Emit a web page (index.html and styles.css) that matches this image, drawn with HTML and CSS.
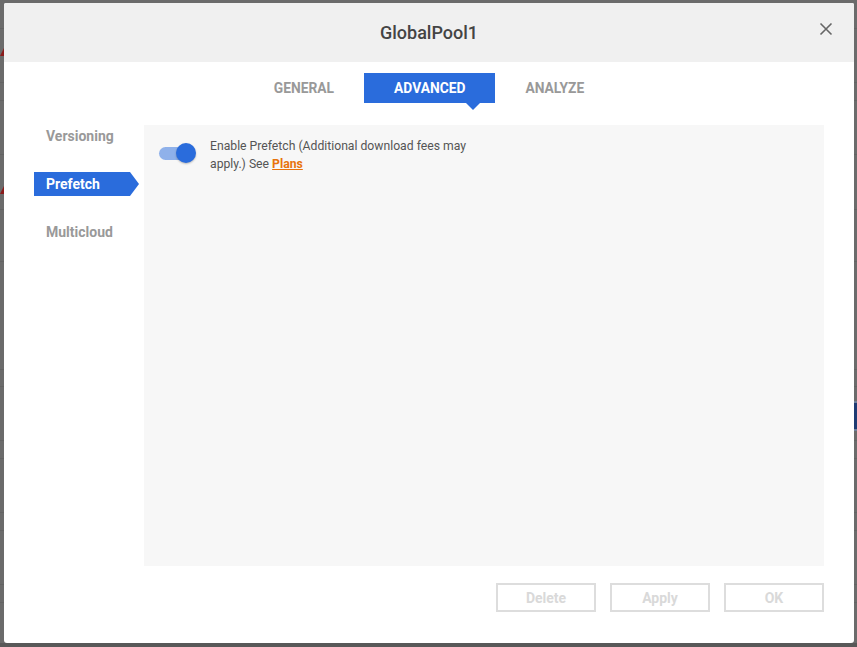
FILE: index.html
```html
<!DOCTYPE html>
<html>
<head>
<meta charset="utf-8">
<link rel="stylesheet" href="styles.css">
</head>
<body>
<div class="backdrop">
  <div class="bd-line" style="top:28px"></div>
  <div class="bd-line" style="top:82px"></div>
  <div class="bd-line" style="top:100px"></div>
  <div class="bd-line" style="top:154px"></div>
  <div class="bd-line" style="top:209px"></div>
  <div class="bd-line" style="top:261px"></div>
  <div class="bd-line" style="top:369px"></div>
  <div class="bd-line" style="top:386px"></div>
  <div class="bd-line" style="top:440px"></div>
  <div class="bd-line" style="top:458px"></div>
  <div class="bd-line" style="top:512px"></div>
  <div class="bd-line" style="top:530px"></div>
  <div class="bd-line" style="top:584px"></div>
  <div class="bd-line" style="top:602px"></div>
  <div class="bd-tri" style="top:48px"></div>
  <div class="bd-tri" style="top:186px"></div>
  <div class="bd-blue"></div>
  <div class="bd-bottom"></div>
</div>

<div class="dialog">
  <div class="header">
    <div class="title">GlobalPool1</div>
    <button class="close" aria-label="Close">
      <svg width="14" height="14" viewBox="0 0 14 14"><path d="M1.5 1.5 L12.5 12.5 M12.5 1.5 L1.5 12.5" stroke="#666" stroke-width="1.6" fill="none"/></svg>
    </button>
  </div>

  <div class="tabs">
    <div class="tab">GENERAL</div>
    <div class="tab active">ADVANCED</div>
    <div class="tab">ANALYZE</div>
  </div>

  <div class="body">
    <div class="sidebar">
      <div class="side-item">Versioning</div>
      <div class="side-item active">Prefetch</div>
      <div class="side-item">Multicloud</div>
    </div>
    <div class="panel">
      <div class="option">
        <div class="toggle"><div class="track"></div><div class="knob"></div></div>
        <div class="option-text">
          <span class="line">Enable Prefetch (Additional download fees may</span>
          <span class="line"><span>apply.) See</span> <a class="link" href="#">Plans</a></span>
        </div>
      </div>
    </div>
  </div>

  <div class="footer">
    <button class="btn">Delete</button>
    <button class="btn">Apply</button>
    <button class="btn">OK</button>
  </div>
</div>
</body>
</html>
```

FILE: styles.css
```css
html, body {
  margin: 0;
  padding: 0;
}
body {
  width: 857px;
  height: 647px;
  background: #6b6b6b;
  font-family: Roboto, "Liberation Sans", Arial, sans-serif;
  overflow: hidden;
  position: relative;
}
.backdrop {
  position: absolute;
  inset: 0;
}
.bd-line {
  position: absolute;
  left: 0;
  right: 0;
  height: 1px;
  background: #636363;
}
.bd-tri {
  position: absolute;
  left: 0;
  width: 0;
  height: 0;
  border-left: 4px solid transparent;
  border-bottom: 8px solid #8a1b1b;
}
.bd-blue {
  position: absolute;
  right: 0;
  top: 401px;
  width: 4px;
  height: 30px;
  background: #1e3b73;
  border-top: 2px solid #6f7f99;
  border-bottom: 2px solid #6f7f99;
  box-sizing: border-box;
}
.bd-bottom {
  position: absolute;
  left: 0;
  right: 0;
  bottom: 0;
  height: 4px;
  background: #585858;
}

.dialog {
  position: absolute;
  left: 4px;
  top: 3px;
  width: 850px;
  height: 640px;
  background: #fff;
  border-radius: 2px 2px 3px 3px;
  display: flex;
  flex-direction: column;
  overflow: hidden;
}
.header {
  height: 59px;
  background: #f0f0f0;
  display: flex;
  align-items: center;
  justify-content: center;
  position: relative;
  flex: none;
}
.title {
  font-size: 18px;
  font-weight: 500;
  color: #444;
  margin-top: -1px;
}
.close {
  position: absolute;
  right: 21px;
  top: 19px;
  width: 14px;
  height: 14px;
  padding: 0;
  border: 0;
  background: none;
  display: block;
}
.close svg { display: block; }

.tabs {
  display: flex;
  justify-content: center;
  margin-top: 11px;
  height: 30px;
  flex: none;
}
.tab {
  padding: 0 30px;
  height: 30px;
  line-height: 30px;
  font-size: 13.8px;
  font-weight: 700;
  color: #999;
  position: relative;
}
.tab.active {
  background: #2a6cdc;
  color: #fff;
}
.tab.active::after {
  content: "";
  position: absolute;
  right: 14px;
  top: 29px;
  width: 0;
  height: 0;
  border-left: 8px solid transparent;
  border-right: 8px solid transparent;
  border-top: 8px solid #2a6cdc;
}

.body {
  display: flex;
  padding: 0 30px;
  margin-top: 22px;
  flex: none;
}
.sidebar {
  width: 110px;
  flex: none;
  display: flex;
  flex-direction: column;
  gap: 24px;
  margin-top: -1px;
}
.side-item {
  width: 96px;
  height: 24px;
  line-height: 24px;
  padding-left: 12px;
  box-sizing: border-box;
  font-size: 14px;
  font-weight: 700;
  color: #999;
  position: relative;
}
.side-item.active {
  background: #2a6cdc;
  color: #fff;
}
.side-item.active::after {
  content: "";
  position: absolute;
  left: 96px;
  top: 0;
  width: 0;
  height: 0;
  border-top: 12px solid transparent;
  border-bottom: 12px solid transparent;
  border-left: 9px solid #2a6cdc;
}
.panel {
  width: 680px;
  height: 441px;
  background: #f7f7f7;
  box-sizing: border-box;
  padding: 12px 0 0 15px;
}
.option {
  display: flex;
  align-items: flex-start;
}
.toggle {
  position: relative;
  width: 37px;
  height: 20px;
  margin-top: 6px;
  flex: none;
}
.track {
  position: absolute;
  left: 0;
  top: 4px;
  width: 32px;
  height: 13px;
  border-radius: 7px;
  background: #8fb1ea;
}
.knob {
  position: absolute;
  left: 17px;
  top: 0;
  width: 20px;
  height: 20px;
  border-radius: 50%;
  background: #2a6cdc;
  box-shadow: 0 1px 2px rgba(0,0,0,0.25);
}
.option-text {
  margin: 0 0 0 14px;
  display: flex;
  flex-direction: column;
  font-size: 12.2px;
  line-height: 18px;
  color: #555;
}
.line {
  display: block;
  white-space: nowrap;
}
.link {
  color: #e8730c;
  font-weight: 700;
  text-decoration: underline;
}

.footer {
  display: flex;
  justify-content: flex-end;
  gap: 14px;
  padding: 0 30px;
  margin-top: 17px;
}
.btn {
  width: 100px;
  height: 29px;
  border: 2px solid #ddd;
  background: #fff;
  color: #d9d9d9;
  font-family: Roboto, "Liberation Sans", Arial, sans-serif;
  font-size: 14px;
  font-weight: 700;
  padding: 0;
  box-sizing: border-box;
}
```
